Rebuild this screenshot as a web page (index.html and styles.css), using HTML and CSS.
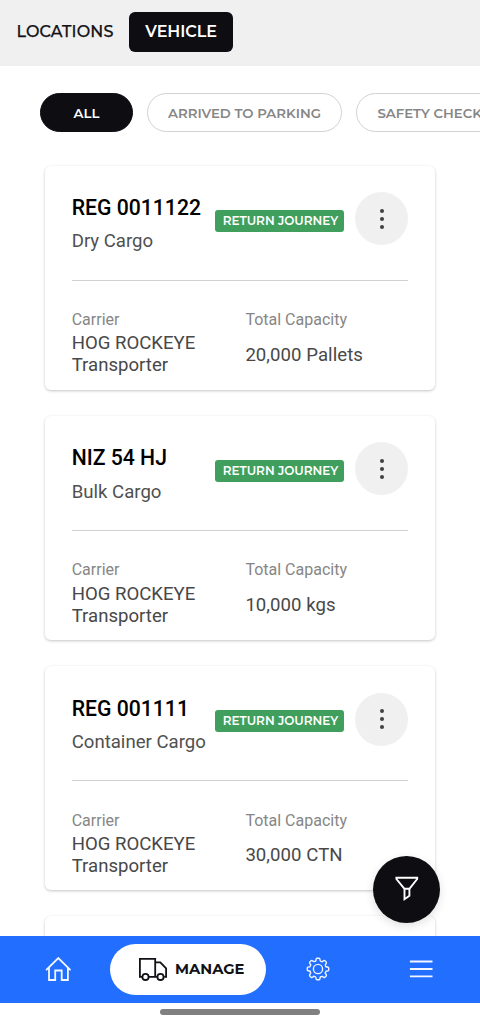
FILE: index.html
```html
<!DOCTYPE html>
<html lang="en">
<head>
<meta charset="utf-8">
<meta name="viewport" content="width=device-width, initial-scale=1">
<title>Vehicles</title>
<link rel="stylesheet" href="styles.css">
</head>
<body>
<div class="app">
  <header class="tabs">
    <span class="tab"><span class="tab-text-locations">LOCATIONS</span></span>
    <span class="tab tab-active"><span class="tab-text-vehicle">VEHICLE</span></span>
  </header>
  <main class="content">
    <div class="chips">
      <span class="chip chip-all">ALL</span>
      <span class="chip chip-arrived">ARRIVED TO PARKING</span>
      <span class="chip chip-safety">SAFETY CHECK</span>
    </div>
    <section class="list">
      <article class="card">
        <div class="card-head">
          <div class="names"><h2 class="reg">REG 0011122</h2><p class="cargo">Dry Cargo</p></div>
          <span class="badge">RETURN JOURNEY</span>
          <span class="more"><i class="dot"></i><i class="dot"></i><i class="dot"></i></span>
        </div>
        <div class="details">
          <div class="detail"><p class="label">Carrier</p><p class="value">HOG ROCKEYE<br>Transporter</p></div>
          <div class="detail"><p class="label">Total Capacity</p><p class="value value-single">20,000 Pallets</p></div>
        </div>
      </article>
      <article class="card">
        <div class="card-head">
          <div class="names"><h2 class="reg">NIZ 54 HJ</h2><p class="cargo">Bulk Cargo</p></div>
          <span class="badge">RETURN JOURNEY</span>
          <span class="more"><i class="dot"></i><i class="dot"></i><i class="dot"></i></span>
        </div>
        <div class="details">
          <div class="detail"><p class="label">Carrier</p><p class="value">HOG ROCKEYE<br>Transporter</p></div>
          <div class="detail"><p class="label">Total Capacity</p><p class="value value-single">10,000 kgs</p></div>
        </div>
      </article>
      <article class="card">
        <div class="card-head">
          <div class="names"><h2 class="reg">REG 001111</h2><p class="cargo">Container Cargo</p></div>
          <span class="badge">RETURN JOURNEY</span>
          <span class="more"><i class="dot"></i><i class="dot"></i><i class="dot"></i></span>
        </div>
        <div class="details">
          <div class="detail"><p class="label">Carrier</p><p class="value">HOG ROCKEYE<br>Transporter</p></div>
          <div class="detail"><p class="label">Total Capacity</p><p class="value value-single">30,000 CTN</p></div>
        </div>
      </article>
      <article class="card"></article>
    </section>
    <span class="fab">
      <svg width="26" height="28" viewBox="0 0 26 28" fill="none" stroke="#fff" stroke-width="1.9"><path d="M2.4 2.8H23.2V4L15.4 13.8V20.8L10.5 24.2V13.8L2.4 4ZM10.5 13.8H15.4"/></svg>
    </span>
  </main>
  <nav class="nav">
    <span class="nav-item nav-home">
      <svg width="28" height="28" viewBox="0 0 28 28" fill="none" stroke="#f4f7ff" stroke-width="1.8" stroke-linejoin="miter" stroke-linecap="round"><path d="M2.6 14.7 14.3 3 26 14.7M5 12.7V25H11.2V15.5H17.7V25H23.9V12.7"/></svg>
    </span>
    <span class="nav-pill">
      <svg class="truck" width="30" height="26" viewBox="0 0 30 26" fill="none" stroke="#111116" stroke-width="1.8"><path d="M4.2 20.8H1.9V2.8H17.2V20.8H10.4M17.2 6.3H22.3L28.1 12.4V20.8H26.2M17.2 20.8H18.9"/><circle cx="7.5" cy="20.9" r="3.1"/><circle cx="22.5" cy="20.9" r="3.1"/></svg>
      <span class="manage">MANAGE</span>
    </span>
    <span class="nav-item nav-gear">
      <svg width="26" height="26" viewBox="-13 -13 26 26" fill="none" stroke="#eef3ff" stroke-width="1.4" stroke-linecap="round" stroke-linejoin="round">
        <defs><path id="tooth" d="M-2.3-8.1-1.8-10Q-1.6-10.7-.9-10.7H.9Q1.6-10.7 1.8-10L2.3-8.1Q3.1-7.2 4.1-7.35"/></defs>
        <use href="#tooth"/><use href="#tooth" transform="rotate(45)"/><use href="#tooth" transform="rotate(90)"/><use href="#tooth" transform="rotate(135)"/><use href="#tooth" transform="rotate(180)"/><use href="#tooth" transform="rotate(225)"/><use href="#tooth" transform="rotate(270)"/><use href="#tooth" transform="rotate(315)"/>
        <circle r="4.6"/>
      </svg>
    </span>
    <span class="nav-item nav-menu">
      <svg width="24" height="20" viewBox="0 0 24 20" stroke="#f4f7ff" stroke-width="1.8"><path d="M.9 2.5H23.5M.9 10H23.5M.9 17.4H23.5"/></svg>
    </span>
  </nav>
  <footer class="home-area"><span class="home-bar"></span></footer>
</div>
</body>
</html>
```
FILE: styles.css
```css
* { box-sizing: border-box; }
body, h2, p { margin: 0; }
body { background: #fff; overflow: hidden; font-family: Roboto, sans-serif; }
.app { width: 480px; height: 1024px; display: flex; flex-direction: column; overflow: hidden; }
.tabs, .chips, .badge, .manage { font-family: Montserrat, Inter, sans-serif; white-space: nowrap; }
.tabs { height: 66px; flex: none; background: #f0f0f0; display: flex; align-items: flex-start; padding: 12.4px 16px; gap: 16px; font-size: 16px; font-weight: 600; color: #111116; }
.tab { height: 40px; line-height: 40px; width: 97px; }
.tab-active { width: 104px; background: #0d0d12; color: #fff; border-radius: 6px; padding-left: 16.3px; }
.tab-text-locations { letter-spacing: .14px; font-weight: 500; -webkit-text-stroke: .25px #111116; padding-left: .5px; }
.tab-text-vehicle { letter-spacing: -.05px; }
.content { position: relative; flex: 1; min-height: 0; overflow: hidden; display: flex; flex-direction: column; }
.chips { display: flex; flex: none; gap: 14px; padding: 26.6px 0 0 40px; }
.chip { flex: none; height: 39.6px; line-height: 38px; border: 1.3px solid #d2d2d2; border-radius: 20px; color: #868686; font-size: 13.3px; font-weight: 600; padding-left: 20px; width: 195.4px; }
.chip-all { width: 93px; padding: 0; text-align: center; background: #0d0d12; border-color: #0d0d12; color: #fff; }
.list { display: flex; flex-direction: column; gap: 26px; padding: 33.4px 45px 0; }
.card { flex: none; height: 224.3px; border-radius: 6px; background: #fff; padding: 0 27px 0 26.7px; box-shadow: 0 1px 3px rgba(0,0,0,.23); }
.card-head { height: 115px; border-bottom: 1px solid #d0d0d0; display: flex; padding-top: 26.5px; }
.names { width: 143.8px; flex: none; white-space: nowrap; }
.reg { font-size: 21.2px; font-weight: 500; line-height: 32px; color: #000; }
.cargo { font-size: 18.6px; line-height: 24px; margin-top: 5.4px; color: #505050; }
.badge { width: 129px; height: 22px; margin-top: 17.6px; flex: none; background: #409f5c; color: #fff; border-radius: 3px; font-size: 12px; font-weight: 600; line-height: 22px; text-align: center; padding-left: 1px; }
.more { width: 53px; height: 53px; border-radius: 50%; background: #f0f0f0; margin-left: 10.3px; padding-left: 1px; flex: none; display: flex; flex-direction: column; align-items: center; justify-content: center; gap: 4px; }
.dot { width: 4px; height: 4px; border-radius: 50%; background: #404040; }
.details { display: grid; grid-template-columns: 173.7px 1fr; padding-top: 28.5px; }
.label { font-size: 16px; line-height: 22px; color: #868686; }
.value { font-size: 18.6px; line-height: 22px; color: #484848; margin-top: 1.4px; white-space: nowrap; }
.value-single { margin-top: 12.6px; letter-spacing: .05px; }
.fab { position: absolute; right: 40px; bottom: 13.5px; width: 67px; height: 67px; border-radius: 50%; background: #0d0d12; display: flex; align-items: center; justify-content: center; box-shadow: 0 3px 10px rgba(0,0,0,.12); }
.nav { flex: none; height: 66.5px; background: #216eff; display: flex; align-items: center; }
.nav-item { display: flex; flex: none; }
.nav-home { width: 66px; margin-left: 44px; }
.nav-pill { flex: none; width: 156px; height: 51px; border-radius: 26px; background: #fff; display: flex; align-items: center; padding-left: 28px; }
.truck { flex: none; margin-right: 7px; }
.manage { font-size: 14.7px; font-weight: 700; color: #111116; }
.nav-gear { width: 65px; margin-left: 38.8px; }
.nav-menu { margin-left: 39.3px; }
.home-area { flex: none; height: 21.5px; display: flex; justify-content: center; padding-top: 6.5px; }
.home-bar { width: 160px; height: 5.5px; background: #808080; border-radius: 3px; }
```
